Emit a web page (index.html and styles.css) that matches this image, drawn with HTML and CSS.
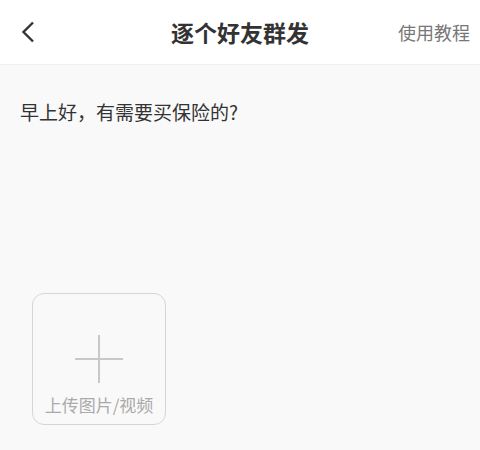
FILE: index.html
```html
<!DOCTYPE html>
<html lang="zh">
<head>
  <meta charset="UTF-8">
  <meta name="viewport" content="width=device-width, initial-scale=1.0">
  <title>逐个好友群发</title>
  <link rel="stylesheet" href="styles.css">
</head>
<body>
  <header class="top-bar">
    <span class="back">
      <svg width="14" height="22" viewBox="0 0 14 22"><path d="M12 1.5 L2.5 11 L12 20.5" fill="none" stroke="#333" stroke-width="2.4"/></svg>
    </span>
    <h1 class="title">逐个好友群发</h1>
    <span class="help">使用教程</span>
  </header>

  <main class="content">
    <p class="message">早上好，有需要买保险的?</p>
    <div class="upload">
      <span class="plus"></span>
      <span class="upload-label">上传图片/视频</span>
    </div>
  </main>
</body>
</html>
```
FILE: styles.css
```css
body {
  margin: 0;
  font-family: "Noto Sans CJK SC", "Noto Sans", sans-serif;
  background: #f9f9f9;
  color: #333;
}
.top-bar {
  height: 64px;
  background: #fff;
  border-bottom: 1px solid #eee;
  display: flex;
  align-items: center;
  justify-content: space-between;
  padding: 0 10px 0 21px;
  position: relative;
}
.back { display: flex; align-items: center; }
.title {
  position: absolute;
  left: 0;
  right: 0;
  text-align: center;
  margin: 0;
  font-size: 23px;
  font-weight: bold;
  color: #333;
  pointer-events: none;
}
.help {
  font-size: 18px;
  color: #777;
}
.content {
  padding: 0 20px;
}
.message {
  margin: 0;
  padding-top: 33px;
  font-size: 19px;
  line-height: 27px;
}
.upload {
  margin: 168px 0 0 12px;
  width: 132px;
  height: 130px;
  border: 1.5px solid #d6d6d6;
  border-radius: 12px;
  display: flex;
  flex-direction: column;
  align-items: center;
}
.plus {
  position: relative;
  width: 48px;
  height: 48px;
  margin-top: 41px;
}
.plus::before, .plus::after {
  content: "";
  position: absolute;
  background: #c8c8c8;
}
.plus::before { left: 0; right: 0; top: 23px; height: 2px; }
.plus::after { top: 0; bottom: 0; left: 23px; width: 2px; }
.upload-label {
  margin-top: 9px;
  font-size: 17px;
  color: #aaa;
}
```
